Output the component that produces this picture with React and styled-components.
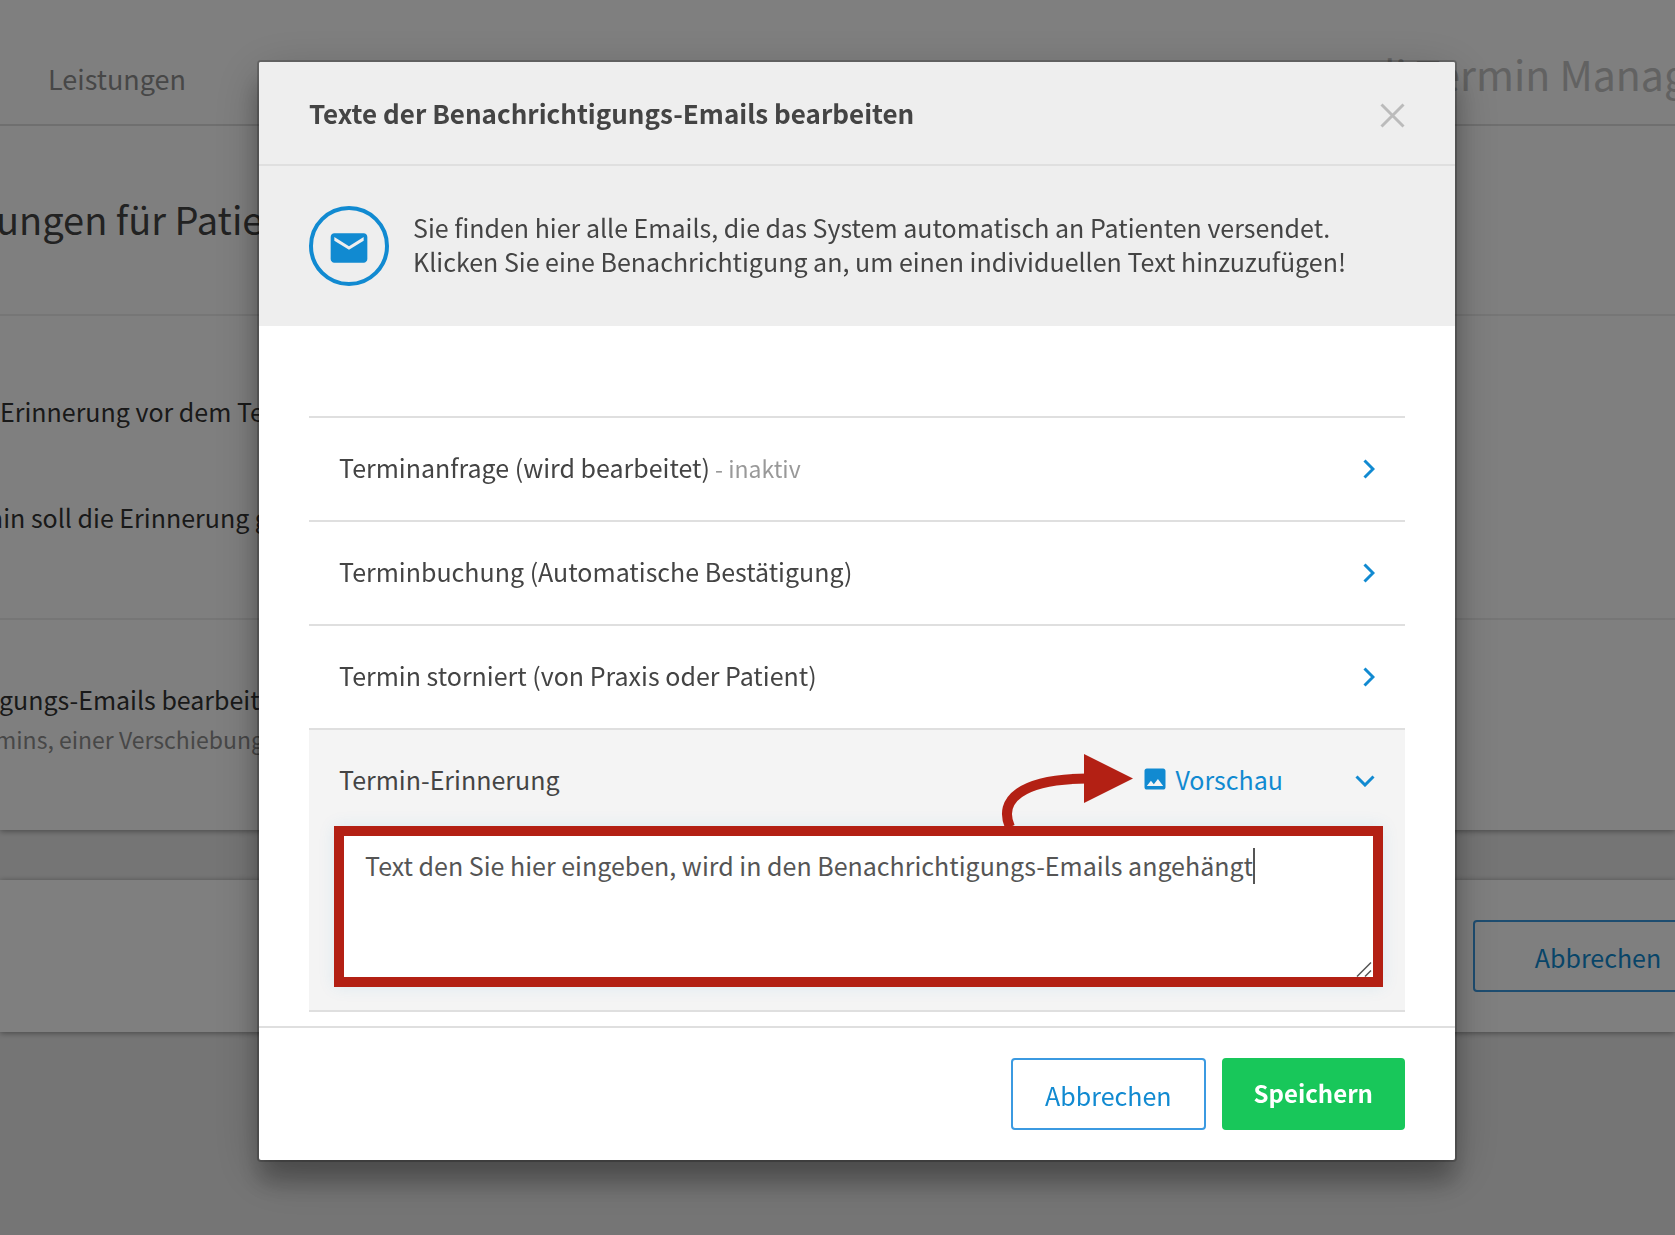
import React, { useState } from 'react';
import styled, { createGlobalStyle } from 'styled-components';
import { MdEmail, MdImage } from 'react-icons/md';

const blue = '#118ad1';
const red = '#b32014';
const line = '#dfdfdf';

const GlobalStyle = createGlobalStyle`
  * { box-sizing: border-box; }
  body {
    margin: 0;
    overflow: hidden;
    background: #ebebeb;
    color: #444;
    font-family: "Noto Sans CJK SC", "Noto Sans", sans-serif;
    font-size: 25px;
    line-height: 34px;
  }
  button, textarea { font: inherit; }
`;

// ---- page behind the dialog ----

const Page = styled.div`
  min-height: 100vh;
  overflow: hidden;
  white-space: nowrap;
`;

const PageCard = styled.div`
  background: #fff;
  box-shadow: 0 1px 6px rgba(0, 0, 0, 0.4);
`;

const TopBar = styled.header`
  display: flex;
  align-items: center;
  justify-content: space-between;
  height: 126px;
  padding: 22px 0 0 48px;
  border-bottom: 2px solid #dedede;
`;

const NavLink = styled.a`
  padding-top: 12px;
  color: #8f8f8f;
  font-size: 27px;
  text-decoration: none;
`;

const Brand = styled.div`
  width: 408px;
  color: #c4c4c4;
  font-size: 41px;
  line-height: 48px;
`;

const PageSection = styled.section`
  display: flex;
  flex-direction: column;
  justify-content: center;
  height: ${props => props.$height}px;
  padding-bottom: ${props => props.$bottom || 0}px;
  border-bottom: ${props => (props.$last ? 0 : 2)}px solid #ececec;
  color: #333;
`;

// $cut: how far the line runs out of the left edge
const PageLine = styled.div`
  margin-left: -${props => props.$cut || 0}px;
`;

const PageHeading = styled.h2`
  margin: 0 0 0 -4px;
  font-size: 38px;
  line-height: 56px;
  font-weight: 400;
  color: #444;
`;

const Setting = styled(PageLine)`
  height: 106px;
`;

const Hint = styled(PageLine)`
  margin-top: 6px;
  color: #8f8f8f;
  font-size: 23px;
`;

const PageFooter = styled(PageCard)`
  display: flex;
  align-items: center;
  justify-content: flex-end;
  height: 152px;
  margin-top: 50px;
`;

// ---- dialog ----

const Overlay = styled.div`
  position: fixed;
  inset: 0;
  padding: 62px 220px 0 259px;
  background: rgba(0, 0, 0, 0.5);
`;

const Dialog = styled.div`
  background: #fff;
  border-radius: 2px;
  box-shadow:
    0 0 0 2px rgba(0, 0, 0, 0.2),
    0 22px 24px rgba(0, 0, 0, 0.26),
    0 12px 50px rgba(0, 0, 0, 0.22);
`;

const DialogHeader = styled.header`
  display: flex;
  align-items: center;
  justify-content: space-between;
  height: 104px;
  padding: 0 50px;
  background: #eee;
  border-bottom: 2px solid ${line};
  border-radius: 2px 2px 0 0;
`;

const Title = styled.h1`
  margin: 0;
  font-size: 26px;
  line-height: 34px;
  font-weight: 700;
`;

const IconButton = styled.button`
  display: flex;
  padding: 0;
  border: 0;
  background: none;
  color: ${blue};
  cursor: pointer;
`;

const CloseButton = styled(IconButton)`
  padding-top: 5px;
  color: #bbb;
`;

const Info = styled.div`
  display: flex;
  align-items: center;
  gap: 24px;
  height: 160px;
  padding: 0 50px;
  background: #eee;

  p {
    margin: 0;
    padding-bottom: 4px;
  }
`;

const RoundIcon = styled.div`
  display: flex;
  align-items: center;
  justify-content: center;
  flex: none;
  width: 80px;
  height: 80px;
  padding-top: 4px;
  border: 4px solid ${blue};
  border-radius: 50%;
  color: ${blue};
`;

const List = styled.ul`
  margin: 0;
  padding: 90px 50px 14px;
  list-style: none;
`;

const Item = styled.li`
  position: relative;
  border-top: 2px solid ${line};

  &:last-child {
    padding-bottom: 23px;
    border-bottom: 2px solid ${line};
    background: #f4f4f4;
  }
`;

const ItemRow = styled.div`
  display: flex;
  align-items: center;
  height: 102px;
  padding: 0 30px;

  > :first-child {
    flex: 1;
    padding-bottom: 4px;
  }
`;

const Inactive = styled.small`
  color: #999;
  font-size: 23px;
`;

const Preview = styled.a`
  display: flex;
  align-items: center;
  gap: 6px;
  margin-right: 72px;
  padding-bottom: 4px;
  color: ${blue};
  text-decoration: none;
`;

const Field = styled.div`
  position: relative;
  margin: -6px 22px 0 25px;
`;

const TextArea = styled.textarea`
  display: block;
  width: 100%;
  height: 161px;
  padding: 12px 21px;
  border: 10px solid ${red};
  border-radius: 0;
  outline: 0;
  background: #fff;
  box-shadow: 0 0 16px rgba(17, 138, 209, 0.1);
  color: #555;
  line-height: 34px;
  resize: none;
`;

const Caret = styled.span`
  position: absolute;
  top: 22px;
  width: 2px;
  height: 36px;
  background: #555;
`;

const Grip = styled.svg`
  position: absolute;
  right: 11px;
  bottom: 10px;
`;

const Arrow = styled.svg`
  position: absolute;
  top: 22px;
  right: 272px;
`;

const DialogFooter = styled.footer`
  display: flex;
  justify-content: flex-end;
  gap: 16px;
  padding: 30px 50px;
  border-top: 2px solid ${line};
`;

const Button = styled.button`
  height: 72px;
  padding: 2px 32px 0;
  border: 2px solid #3b9ae1;
  border-radius: 4px;
  background: transparent;
  color: ${blue};
  cursor: pointer;
`;

const WideButton = styled(Button)`
  width: 250px;
  margin-right: -48px;
`;

const SaveButton = styled(Button)`
  padding: 0 30px 2px;
  border-color: #18c75a;
  background: #18c75a;
  color: #fff;
  font-size: 24px;
  font-weight: 700;
`;

const items = [
  { label: 'Terminanfrage (wird bearbeitet)', inactive: true },
  { label: 'Terminbuchung (Automatische Bestätigung)' },
  { label: 'Termin storniert (von Praxis oder Patient)' },
];

function Chevron({ down }) {
  return (
    <svg width={down ? 20 : 12} height={down ? 12 : 20} viewBox={down ? '0 0 20 12' : '0 0 12 20'}
      fill="none" stroke="currentColor" strokeWidth="3">
      <path d={down ? 'M1.5 1.5 10 10 18.5 1.5' : 'M1.5 1.5 10 10 1.5 18.5'} />
    </svg>
  );
}

function textWidth(text) {
  const ctx = document.createElement('canvas').getContext('2d');
  ctx.font = '25px "Noto Sans CJK SC", "Noto Sans", sans-serif';
  return Math.round(ctx.measureText(text).width);
}

function Background() {
  return (
    <Page aria-hidden="true">
      <PageCard>
        <TopBar>
          <NavLink href="#leistungen">Leistungen</NavLink>
          <Brand>samedi Termin Manager</Brand>
        </TopBar>
        <PageSection $height={190} $bottom={2}>
          <PageHeading>ungen für Patienten</PageHeading>
        </PageSection>
        <PageSection $height={304} $bottom={6}>
          <Setting>Erinnerung vor dem Termin</Setting>
          <PageLine $cut={20}>min soll die Erinnerung gesendet werden</PageLine>
        </PageSection>
        <PageSection $height={210} $bottom={12} $last>
          <PageLine $cut={8}>igungs-Emails bearbeiten</PageLine>
          <Hint $cut={5}>mins, einer Verschiebung</Hint>
        </PageSection>
      </PageCard>
      <PageFooter>
        <WideButton type="button">Abbrechen</WideButton>
      </PageFooter>
    </Page>
  );
}

function App() {
  const [text, setText] = useState('Text den Sie hier eingeben, wird in den Benachrichtigungs-Emails angehängt');

  return (
    <>
      <GlobalStyle />
      <Background />
      <Overlay>
        <Dialog role="dialog" aria-labelledby="title">
          <DialogHeader>
            <Title id="title">Texte der Benachrichtigungs-Emails bearbeiten</Title>
            <CloseButton type="button" aria-label="Schließen">
              <svg width="25" height="25" viewBox="0 0 25 25" stroke="currentColor" strokeWidth="3">
                <path d="M1.5 1.5 23.5 23.5M23.5 1.5 1.5 23.5" />
              </svg>
            </CloseButton>
          </DialogHeader>
          <Info>
            <RoundIcon><MdEmail size={44} /></RoundIcon>
            <p>
              Sie finden hier alle Emails, die das System automatisch an Patienten versendet.<br />
              Klicken Sie eine Benachrichtigung an, um einen individuellen Text hinzuzufügen!
            </p>
          </Info>
          <List>
            {items.map(item => (
              <Item key={item.label}>
                <ItemRow>
                  <span>{item.label}{item.inactive && <Inactive> - inaktiv</Inactive>}</span>
                  <IconButton type="button" aria-label={item.label}><Chevron /></IconButton>
                </ItemRow>
              </Item>
            ))}
            <Item>
              <ItemRow>
                <label htmlFor="reminder">Termin-Erinnerung</label>
                <Preview href="#vorschau"><MdImage size={28} />Vorschau</Preview>
                <IconButton type="button" aria-label="Termin-Erinnerung"><Chevron down /></IconButton>
              </ItemRow>
              <Field>
                <TextArea id="reminder" value={text} onChange={e => setText(e.target.value)} />
                <Caret style={{ left: 31 + textWidth(text) }} />
                <Grip width="16" height="16" viewBox="0 0 16 16" stroke="#555" strokeWidth="1.5">
                  <path d="M1 15.5 15 1.5M9 15.5 15 9.5" />
                </Grip>
              </Field>
              <Arrow width="134" height="76" viewBox="0 0 134 76">
                <path d="M11 75C-1 48 22 27 88 26.500" fill="none" stroke={red} strokeWidth="10" />
                <path d="M85 2 134 26.500 85 51z" fill={red} />
              </Arrow>
            </Item>
          </List>
          <DialogFooter>
            <Button type="button">Abbrechen</Button>
            <SaveButton type="button">Speichern</SaveButton>
          </DialogFooter>
        </Dialog>
      </Overlay>
    </>
  );
}

export default App;
